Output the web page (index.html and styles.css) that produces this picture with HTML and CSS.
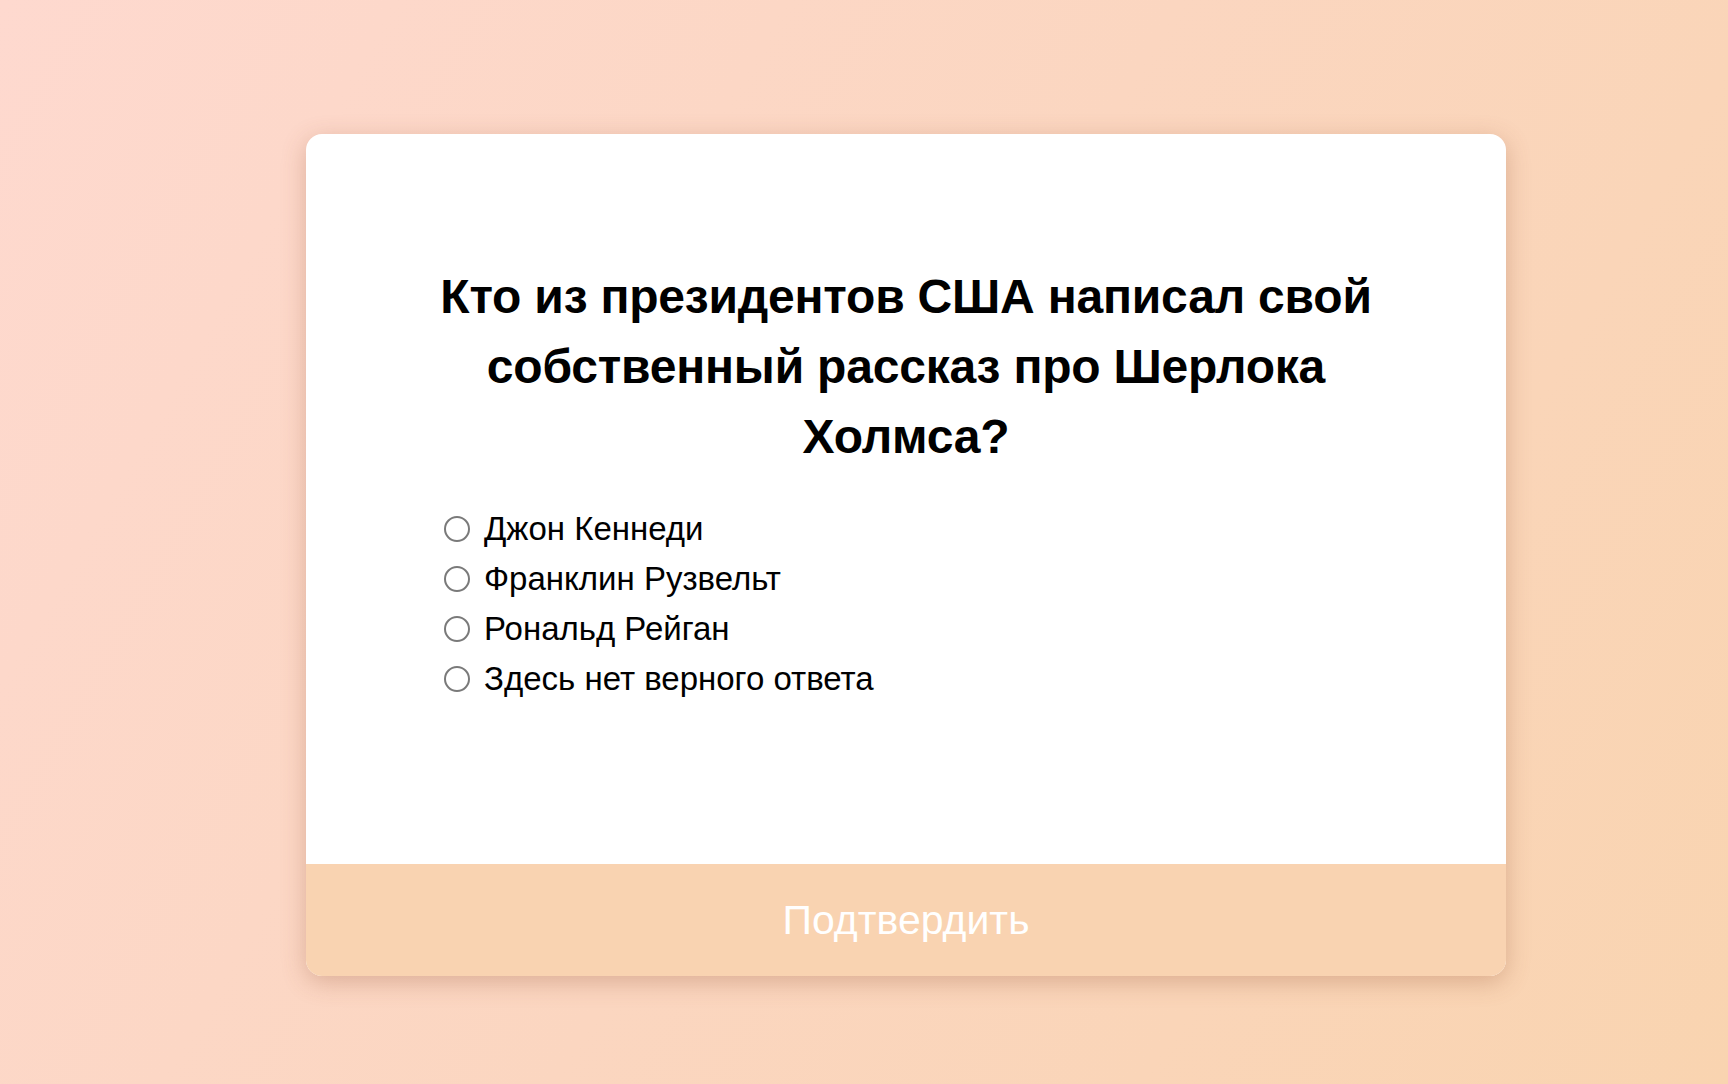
FILE: index.html
```html
<!DOCTYPE html>
<html lang="ru">
<head>
<meta charset="utf-8">
<title>Квиз</title>
<link rel="stylesheet" href="styles.css">
</head>
<body>
<main class="page">
  <form class="card">
    <div class="card-body">
      <h1 class="question">Кто из президентов США написал свой собственный рассказ про Шерлока Холмса?</h1>
      <ul class="answers">
        <li><label class="answer"><input type="radio" name="a" class="radio"><span>Джон Кеннеди</span></label></li>
        <li><label class="answer"><input type="radio" name="a" class="radio"><span>Франклин Рузвельт</span></label></li>
        <li><label class="answer"><input type="radio" name="a" class="radio"><span>Рональд Рейган</span></label></li>
        <li><label class="answer"><input type="radio" name="a" class="radio"><span>Здесь нет верного ответа</span></label></li>
      </ul>
    </div>
    <button type="button" class="submit">Подтвердить</button>
  </form>
</main>
</body>
</html>
```

FILE: styles.css
```css
* { box-sizing: border-box; }
html, body { margin: 0; height: 100%; }
body {
  font-family: "Liberation Sans", Arial, sans-serif;
  background: linear-gradient(120deg, #fed9cf 0%, #fbd6c0 50%, #f9d4b0 100%);
  min-height: 1084px;
}
.page {
  padding: 134px 0 0 306px;
}
.card {
  width: 1200px;
  height: 842px;
  background: #fff;
  border-radius: 16px;
  box-shadow: 0 6px 24px rgba(150, 80, 50, 0.3);
  display: flex;
  flex-direction: column;
  overflow: hidden;
}
.card-body {
  flex: 1;
  padding: 128px 130px 0;
}
.question {
  margin: 0;
  font-size: 48px;
  line-height: 70px;
  font-weight: 700;
  letter-spacing: -0.2px;
  text-align: center;
  color: #000;
}
.answers {
  list-style: none;
  margin: 32px 0 0 8px;
  padding: 0;
}
.answer {
  display: flex;
  align-items: center;
  height: 50px;
  font-size: 33px;
  color: #000;
  cursor: pointer;
}
.radio {
  appearance: none;
  -webkit-appearance: none;
  margin: 0 14px 0 0;
  width: 26px;
  height: 26px;
  border: 2px solid #7a7a7a;
  border-radius: 50%;
  background: #fff;
  flex: none;
}
.submit {
  height: 112px;
  border: 0;
  background: #f9d3b1;
  color: #fff;
  font-family: "Liberation Sans", Arial, sans-serif;
  font-size: 41px;
  width: 100%;
  cursor: pointer;
}
```
